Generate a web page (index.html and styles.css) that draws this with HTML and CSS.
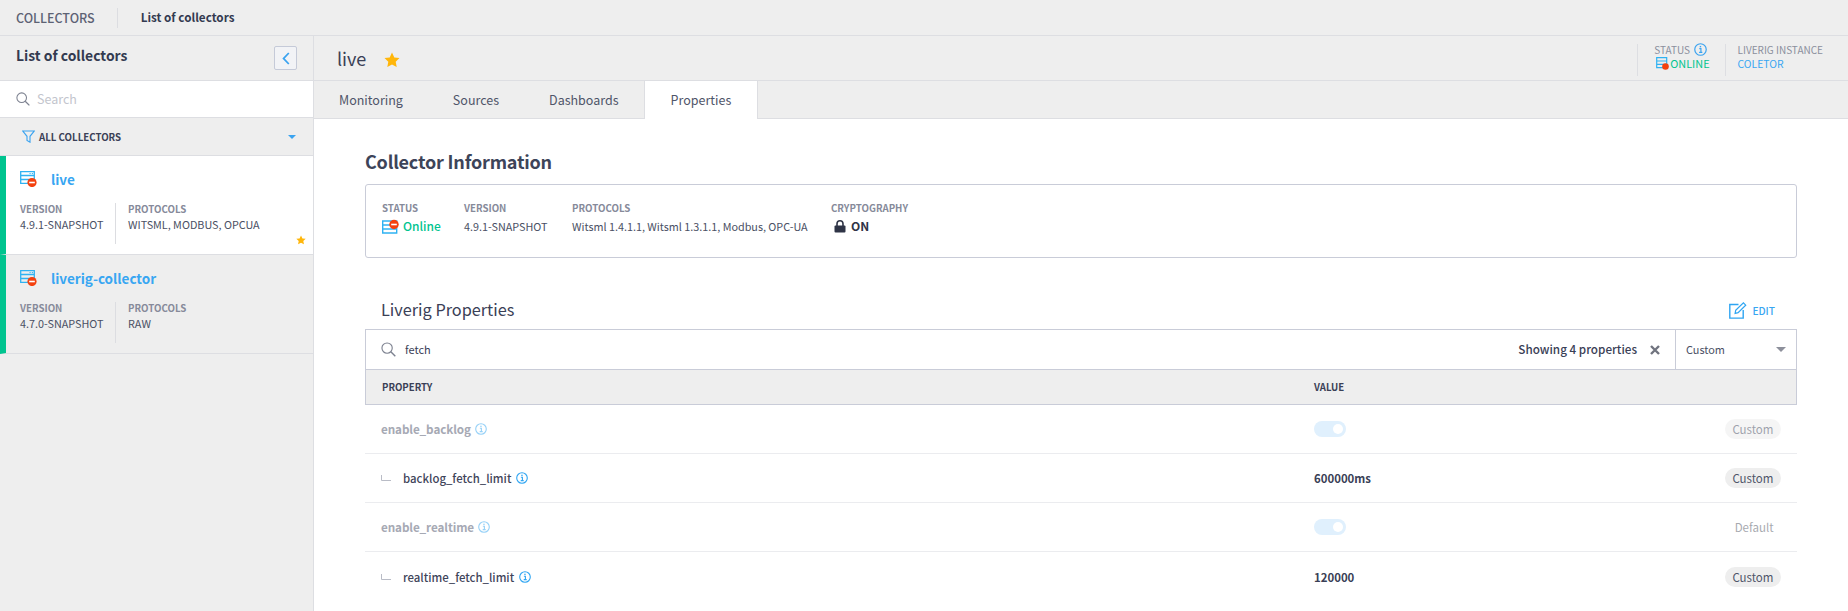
FILE: index.html
```html
<!DOCTYPE html>
<html lang="en">
<head>
<meta charset="utf-8">
<title>List of collectors</title>
<link rel="stylesheet" href="styles.css">
</head>
<body>
<svg class="defs" width="0" height="0" aria-hidden="true">
  <symbol id="server" viewBox="0 0 17 16">
    <path d="M.7.700h13.600v11.600H.7z M.7 4.500h13.600 M.7 8.500h13.600" fill="none" stroke="#2fb2f2" stroke-width="1.300"/>
    <path d="M9.500 2.600h1.200M11.800 2.600h1.200" stroke="#2fb2f2" stroke-width="1"/>
    <circle cx="12" cy="11.500" r="4.600" fill="#f4410f"/>
    <rect x="9.200" y="10.700" width="5.600" height="1.600" fill="#fff"/>
  </symbol>
  <symbol id="info" viewBox="0 0 12 12">
    <circle cx="6" cy="6" r="5.300" fill="none" stroke="currentColor" stroke-width="1.100"/>
    <path d="M4.900 5.200h1.500v3.200M4.700 8.600h3" fill="none" stroke="currentColor" stroke-width="1.100"/>
    <rect x="5.300" y="2.700" width="1.300" height="1.300" fill="currentColor"/>
  </symbol>
  <symbol id="search" viewBox="0 0 16 16">
    <circle cx="6.500" cy="6.500" r="5.500" fill="none" stroke="currentColor" stroke-width="1.200"/>
    <path d="M10.500 10.500l4.800 4.800" stroke="currentColor" stroke-width="1.500"/>
  </symbol>
  <symbol id="star" viewBox="0 0 16 16">
    <path d="M8 .6l2.300 4.800 5.200.7-3.800 3.600 1 5.200L8 12.400l-4.700 2.500 1-5.200L.5 6.100l5.200-.7z" fill="#ffb60a"/>
  </symbol>
  <symbol id="elbow" viewBox="0 0 10 6">
    <path d="M.5 0v5.500H10" fill="none" stroke="#b9bcc6" stroke-width="1"/>
  </symbol>
</svg>

<header class="topbar">
  <span class="crumb-root">COLLECTORS</span>
  <span class="crumb-current">List of collectors</span>
</header>

<div class="shell">
  <aside class="sidebar">
    <div class="side-head">
      <h2 class="side-title">List of collectors</h2>
      <button class="collapse" type="button" aria-label="Collapse">
        <svg width="8" height="13" viewBox="0 0 8 13"><path d="M6.800 1L1.600 6.500l5.200 5.500" fill="none" stroke="#3aa3f0" stroke-width="1.800"/></svg>
      </button>
    </div>
    <div class="side-search">
      <svg class="ico-search" width="14" height="14"><use href="#search"/></svg>
      <span class="placeholder">Search</span>
    </div>
    <div class="side-filter">
      <svg width="13" height="13" viewBox="0 0 13 13"><path d="M.8 1h11.400L8 6.300v5.900l-3-1.800V6.300z" fill="none" stroke="#3aa3f0" stroke-width="1.100"/></svg>
      <span class="filter-label">ALL COLLECTORS</span>
      <span class="caret"></span>
    </div>

    <article class="card card-active">
      <div class="card-title">
        <svg width="17" height="16"><use href="#server"/></svg>
        <span>live</span>
      </div>
      <div class="card-meta">
        <div class="meta-col meta-version">
          <div class="meta-label">VERSION</div>
          <div class="meta-value">4.9.1-SNAPSHOT</div>
        </div>
        <div class="meta-col meta-protocols">
          <div class="meta-label">PROTOCOLS</div>
          <div class="meta-value">WITSML, MODBUS, OPCUA</div>
        </div>
      </div>
      <svg class="card-star" width="10" height="10"><use href="#star"/></svg>
    </article>

    <article class="card">
      <div class="card-title">
        <svg width="17" height="16"><use href="#server"/></svg>
        <span>liverig-collector</span>
      </div>
      <div class="card-meta">
        <div class="meta-col meta-version">
          <div class="meta-label">VERSION</div>
          <div class="meta-value">4.7.0-SNAPSHOT</div>
        </div>
        <div class="meta-col meta-protocols">
          <div class="meta-label">PROTOCOLS</div>
          <div class="meta-value">RAW</div>
        </div>
      </div>
    </article>
  </aside>

  <main class="main">
    <div class="main-head">
      <h1 class="main-title">live</h1>
      <svg class="main-star" width="16" height="16"><use href="#star"/></svg>
      <div class="head-stats">
        <div class="stat stat-status">
          <div class="stat-label">STATUS <svg class="stat-info" width="13" height="13"><use href="#info"/></svg></div>
          <div class="stat-online">
            <svg width="13" height="13" viewBox="0 0 13 13"><path d="M.7.700h10v10H.7z M.7 4h10 M.7 7.300h10" fill="none" stroke="#2fb2f2" stroke-width="1.200"/><circle cx="9.500" cy="9.500" r="3.300" fill="#f4410f"/></svg>
            <span>ONLINE</span>
          </div>
        </div>
        <div class="stat stat-instance">
          <div class="stat-label">LIVERIG INSTANCE</div>
          <div class="stat-link">COLETOR</div>
        </div>
      </div>
    </div>

    <nav class="tabs">
      <span class="tab">Monitoring</span>
      <span class="tab">Sources</span>
      <span class="tab">Dashboards</span>
      <span class="tab tab-active">Properties</span>
    </nav>

    <div class="content">
      <h2 class="section-title">Collector Information</h2>
      <section class="info-box">
        <div class="info-col info-status">
          <div class="meta-label">STATUS</div>
          <div class="info-online">
            <svg width="17" height="15" viewBox="0 0 17 15"><path d="M.7 2h14v12H.7z M.7 6h14 M.7 10h14" fill="none" stroke="#2fb2f2" stroke-width="1.400"/><circle cx="12" cy="5.500" r="4.700" fill="#f4410f"/><rect x="9.200" y="4.700" width="5.600" height="1.600" fill="#fff"/></svg>
            <span>Online</span>
          </div>
        </div>
        <div class="info-col info-version">
          <div class="meta-label">VERSION</div>
          <div class="info-value">4.9.1-SNAPSHOT</div>
        </div>
        <div class="info-col info-protocols">
          <div class="meta-label">PROTOCOLS</div>
          <div class="info-value">Witsml 1.4.1.1, Witsml 1.3.1.1, Modbus, OPC-UA</div>
        </div>
        <div class="info-col">
          <div class="meta-label">CRYPTOGRAPHY</div>
          <div class="info-crypto">
            <svg width="12" height="13" viewBox="0 0 12 13"><path d="M3 6V3.800a3 3 0 0 1 6 0V6" fill="none" stroke="#2f3446" stroke-width="1.600"/><rect x=".5" y="5.500" width="11" height="7" rx="1" fill="#2f3446"/></svg>
            <span>ON</span>
          </div>
        </div>
      </section>

      <div class="props-head">
        <h2 class="props-title">Liverig Properties</h2>
        <span class="edit">
          <svg width="18" height="17" viewBox="0 0 18 17"><path d="M9.500 2.500H.8v13.600h13.400V8" fill="none" stroke="#2fa5f2" stroke-width="1.400"/><path d="M6.700 8.200l7.700-7.300 2.300 2.300-7.600 7.500-3 .7z" fill="none" stroke="#2fa5f2" stroke-width="1.200"/></svg>
          <span>EDIT</span>
        </span>
      </div>

      <div class="props-search">
        <div class="search-field">
          <svg class="ico-search" width="15" height="15"><use href="#search"/></svg>
          <span class="search-text">fetch</span>
          <span class="search-count">Showing 4 properties</span>
          <svg class="search-clear" width="10" height="10" viewBox="0 0 10 10"><path d="M1 1l8 8M9 1l-8 8" stroke="#70747f" stroke-width="2.400"/></svg>
        </div>
        <div class="search-select">
          <span>Custom</span>
          <span class="caret caret-grey"></span>
        </div>
      </div>
      <div class="table-head">
        <span class="col-name">PROPERTY</span>
        <span class="col-value">VALUE</span>
      </div>

      <div class="row row-muted">
        <div class="col-name">
          <span>enable_backlog</span>
          <svg class="row-info" width="12" height="12"><use href="#info"/></svg>
        </div>
        <div class="col-value"><span class="toggle"></span></div>
        <span class="pill">Custom</span>
      </div>
      <div class="row">
        <div class="col-name">
          <svg class="elbow" width="10" height="6"><use href="#elbow"/></svg>
          <span>backlog_fetch_limit</span>
          <svg class="row-info" width="12" height="12"><use href="#info"/></svg>
        </div>
        <div class="col-value value-strong">600000ms</div>
        <span class="pill">Custom</span>
      </div>
      <div class="row row-muted">
        <div class="col-name">
          <span>enable_realtime</span>
          <svg class="row-info" width="12" height="12"><use href="#info"/></svg>
        </div>
        <div class="col-value"><span class="toggle"></span></div>
        <span class="pill pill-plain">Default</span>
      </div>
      <div class="row">
        <div class="col-name">
          <svg class="elbow" width="10" height="6"><use href="#elbow"/></svg>
          <span>realtime_fetch_limit</span>
          <svg class="row-info" width="12" height="12"><use href="#info"/></svg>
        </div>
        <div class="col-value value-strong">120000</div>
        <span class="pill">Custom</span>
      </div>
    </div>
  </main>
</div>
</body>
</html>
```
FILE: styles.css
```css
* { box-sizing: border-box; }
html, body { height: 100%; }
body {
  margin: 0;
  width: 1848px;
  height: 611px;
  overflow: hidden;
  background: #fff;
  color: #3a4056;
  font-family: "Noto Sans CJK SC", "Noto Sans", sans-serif;
  font-size: 12px;
  line-height: 16px;
}
h1, h2 { margin: 0; font-weight: 400; }
svg { display: block; flex: none; }
.defs { position: absolute; }

.topbar {
  height: 36px;
  display: flex;
  align-items: center;
  padding-left: 16px;
  background: #eeeeee;
  border-bottom: 1px solid #dddee2;
}
.crumb-root {
  color: #5d6274;
  font-size: 12.500px;
  font-weight: 500;
  padding-right: 22px;
  border-right: 1px solid #dcdde1;
  line-height: 20px;
}
.crumb-current {
  margin: 0 0 2px 23px;
  font-size: 11.700px;
  font-weight: 700;
  color: #333a50;
}

.shell { display: flex; height: 575px; }

.sidebar {
  width: 314px;
  flex: none;
  background: #eeeeee;
  border-right: 1px solid #dddee2;
}
.side-head {
  height: 45px;
  display: flex;
  align-items: center;
  justify-content: space-between;
  padding: 0 16px;
  border-bottom: 1px solid #dddee2;
}
.side-title { padding-bottom: 7px; font-size: 13.900px; font-weight: 700; color: #333a50; }
.collapse {
  width: 23px;
  height: 24px;
  padding: 0;
  display: flex;
  align-items: center;
  justify-content: center;
  background: #f2f3f6;
  border: 1px solid #c5cad8;
  border-radius: 2px;
}
.side-search {
  height: 37px;
  display: flex;
  align-items: center;
  gap: 7px;
  padding-left: 16px;
  background: #fff;
  border-bottom: 1px solid #dddee2;
}
.ico-search { color: #7d8290; }
.placeholder { color: #c3c5cd; font-size: 12.500px; }
.side-filter {
  height: 38px;
  display: flex;
  align-items: center;
  padding: 0 17px 0 22px;
  border-bottom: 1px solid #dddee2;
}
.filter-label {
  margin-left: 4px;
  font-size: 9.700px;
  font-weight: 700;
  color: #3a4056;
}
.caret {
  margin-left: auto;
  width: 0;
  height: 0;
  border-left: 4px solid transparent;
  border-right: 4px solid transparent;
  border-top: 4px solid #3aa3f0;
}
.caret-grey {
  border-left-width: 5px;
  border-right-width: 5px;
  border-top: 5px solid #8d909b;
}

.card {
  position: relative;
  height: 99px;
  padding: 14px 0 0 14px;
  border-left: 6px solid #00c48f;
  border-bottom: 1px solid #dddee2;
}
.card-active { background: #fff; }
.card-title {
  display: flex;
  align-items: center;
  gap: 14px;
  font-size: 13.500px;
  font-weight: 700;
  color: #38a6f2;
  height: 18px;
}
.card-meta { display: flex; margin-top: 15px; }
.meta-col { height: 41px; }
.meta-version { width: 96px; border-right: 1px solid #dcdde1; }
.meta-protocols { padding-left: 12px; }
.meta-label {
  margin-top: -1px;
  font-size: 9.700px;
  font-weight: 700;
  color: #868a9a;
  line-height: 15px;
}
.meta-value { font-size: 10.800px; color: #4a5064; line-height: 15px; }
.card-star { position: absolute; right: 7px; bottom: 9px; }

.main { flex: 1; min-width: 0; display: flex; flex-direction: column; }
.main-head {
  height: 45px;
  display: flex;
  align-items: center;
  padding-left: 23px;
  background: #eeeeee;
  border-bottom: 1px solid #dddee2;
}
.main-title { padding-bottom: 1px; font-size: 18px; color: #3a4056; }
.main-star { margin: 4px 0 0 18px; }
.head-stats { margin: 4px 0 0 auto; display: flex; padding-right: 25px; }
.stat {
  height: 32px;
  border-left: 1px solid #dddee2;
  font-size: 10px;
  line-height: 13px;
}
.stat-status { padding-left: 16px; }
.stat-instance { margin-left: 15px; padding-left: 12px; }
.stat-label {
  display: flex;
  align-items: center;
  gap: 4px;
  margin-top: -1px;
  color: #8b8e9d;
  height: 13px;
}
.stat-info { color: #3aa3f0; }
.stat-online {
  display: flex;
  align-items: center;
  gap: 1px;
  padding-left: 2px;
  font-size: 10.900px;
  color: #00c48f;
  height: 15px;
}
.stat-link { font-size: 10.400px; line-height: 15px; color: #38a6f2; }

.tabs {
  height: 38px;
  display: flex;
  background: #eeeeee;
  border-bottom: 1px solid #dddee2;
}
.tab {
  padding: 0 25px;
  font-size: 12.500px;
  line-height: 37px;
  color: #4f5569;
}
.tab-active {
  height: 38px;
  padding: 0 26px;
  background: #fff;
  border-left: 1px solid #dddee2;
  border-right: 1px solid #dddee2;
}

.content { padding: 28px 0 0 51px; width: 1483px; }
.section-title { font-size: 18px; font-weight: 700; letter-spacing: -0.2px; line-height: 28px; color: #3d4459; }
.info-box {
  margin-top: 9px;
  height: 74px;
  display: flex;
  padding: 17px 16px 0;
  border: 1px solid #c9ccd8;
  border-radius: 3px;
}
.info-status { width: 82px; }
.info-version { width: 108px; }
.info-protocols { width: 259px; }
.info-online {
  display: flex;
  align-items: center;
  gap: 4px;
  height: 20px;
  font-size: 12px;
  font-weight: 500;
  color: #00c48f;
}
.info-value { font-size: 10.800px; color: #4a5064; line-height: 20px; white-space: nowrap; }
.info-crypto {
  display: flex;
  align-items: center;
  gap: 5px;
  height: 20px;
  padding-left: 3px;
  font-size: 12px;
  font-weight: 700;
  color: #2f3446;
}

.props-head {
  height: 71px;
  display: flex;
  align-items: flex-end;
  justify-content: space-between;
  padding: 0 22px 7px 16px;
}
.props-title { font-size: 16.300px; line-height: 26px; color: #3a4056; }
.edit {
  display: flex;
  align-items: center;
  gap: 5px;
  padding-bottom: 3px;
  font-size: 10.200px;
  font-weight: 500;
  color: #38a6f2;
}
.props-search {
  height: 41px;
  display: flex;
  border: 1px solid #c9ccd8;
}
.search-field {
  flex: 1;
  display: flex;
  align-items: center;
  padding: 0 15px;
  border-right: 1px solid #c9ccd8;
}
.search-text { margin: 0 0 2px 9px; font-size: 11px; color: #3a4056; }
.search-count { margin: 0 0 1px auto; font-size: 11.700px; font-weight: 500; color: #3a4056; }
.search-clear { margin-left: 13px; }
.search-select {
  width: 120px;
  display: flex;
  align-items: center;
  justify-content: space-between;
  padding: 0 10px;
  font-size: 10.900px;
  color: #4a5064;
}
.search-select span:first-child { margin-bottom: 2px; }
.table-head {
  height: 35px;
  display: flex;
  align-items: center;
  padding-left: 16px;
  background: #eeeeee;
  border: solid #c9ccd8;
  border-width: 0 1px 1px;
  font-size: 9.600px;
  font-weight: 700;
  color: #3a4056;
}
.table-head .col-name { width: 932px; }
.col-name {
  width: 933px;
  flex: none;
  display: flex;
  align-items: center;
}
.row {
  height: 49px;
  display: flex;
  align-items: center;
  padding: 0 16px;
  border-bottom: 1px solid #ebecef;
  font-size: 11.400px;
  font-weight: 500;
  color: #3f455a;
}
.row:last-child { border-bottom: 0; }
.row-muted .col-name { font-size: 11.700px; color: #a6a9b4; font-weight: 700; letter-spacing: -0.1px; }
.row-muted .pill { opacity: 0.55; }
.row-muted .row-info { opacity: 0.5; margin-left: 4px; }
.elbow { margin: 0 12px 0 0; }
.row-info { margin-left: 5px; color: #2fa5f2; }
.value-strong { font-size: 11.400px; font-weight: 700; color: #3a4056; }
.toggle {
  display: block;
  position: relative;
  width: 32px;
  height: 16px;
  border-radius: 8px;
  background: #e0f0fd;
}
.toggle::after {
  content: "";
  position: absolute;
  top: 3px;
  right: 3px;
  width: 10px;
  height: 10px;
  border-radius: 50%;
  background: #fff;
}
.pill {
  margin-left: auto;
  padding: 0 7.500px;
  height: 20px;
  line-height: 20px;
  font-size: 11.500px;
  font-weight: 400;
  border-radius: 10px;
  background: #eeeeee;
  color: #4f5569;
}
.row-muted .pill-plain { background: none; color: #60646f; }
```
